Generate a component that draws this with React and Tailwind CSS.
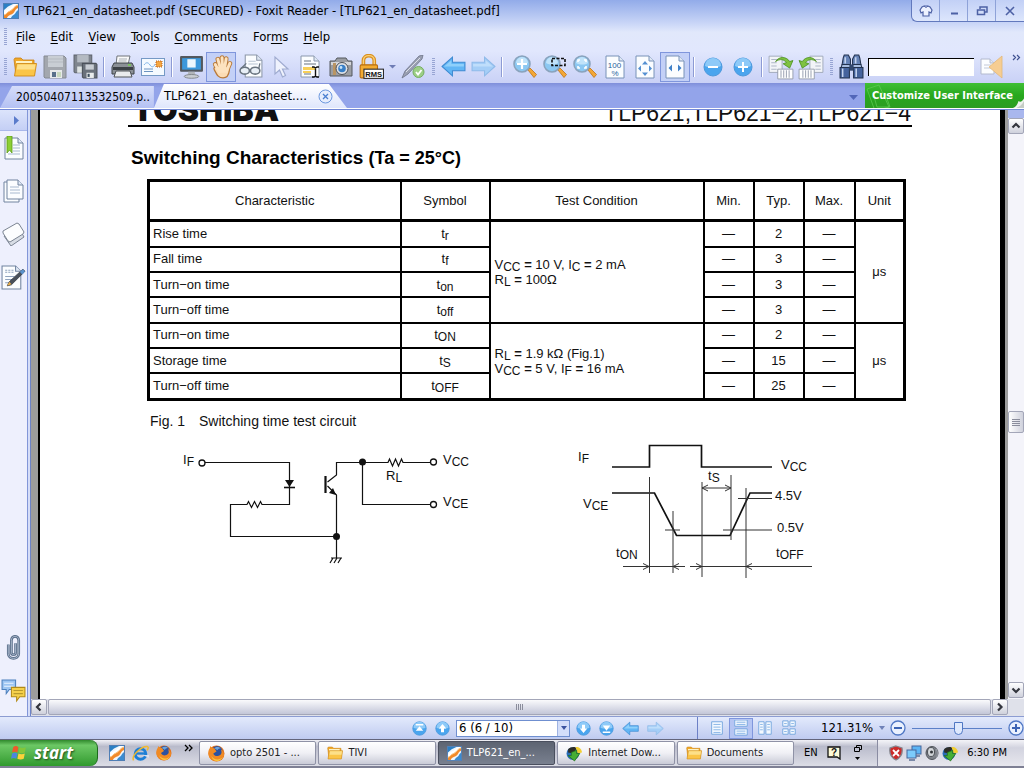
import React from "react";

const UI = "font-['DejaVu_Sans_Condensed','DejaVu_Sans',sans-serif]";

/* ---------- small shared pieces ---------- */

function Svg({ size = 24, children, box = "0 0 24 24", className = "" }) {
  return (
    <svg width={size} height={size} viewBox={box} fill="none" aria-hidden="true" className={`shrink-0 ${className}`}>
      {children}
    </svg>
  );
}

function Tool({ label, active, children }) {
  return (
    <button
      type="button"
      aria-label={label}
      className={`flex h-[30px] w-[30px] shrink-0 items-center justify-center border ${
        active ? "border-[#7f96dc] bg-[#c3d0f7]" : "border-transparent"
      }`}
    >
      {children}
    </button>
  );
}

const Sep = () => (
  <div className="flex w-2 shrink-0 justify-center">
    <div className="h-5 w-[2px] border-l border-[#8d9bd4] bg-white" />
  </div>
);

const Grip = () => (
  <div className="flex w-[10px] shrink-0 justify-center">
    <div className="h-[18px] w-[3px] bg-[repeating-linear-gradient(to_bottom,#98a5d3_0_1px,transparent_1px_2px)]" />
  </div>
);

function FoxitLogo({ size = 16 }) {
  return (
    <Svg size={size} box="0 0 16 16">
      <rect x=".5" y=".5" width="15" height="15" fill="#eef6fd" stroke="#4f7eb5" />
      <path d="M1 1h9L5 3.500 1 7z" fill="#2b7fc4" />
      <path d="M1 9c2-3 5-3 7-5 1-1 2-2 4-3h3c-3 1-4 3-5 5S5 9 3 11l-2 2z" fill="#fff" />
      <path d="M1 15v-3c2 0 3-3 6-4s4-5 8-6v3c-3 1-3 4-5 5.500S5 12 4 15z" fill="#f28a2a" />
      <path d="M1 12c2 0 3-3 6-4s4-5 8-6" stroke="#fbc37d" />
      <path d="M8 15c1-3 4-3 5-6l2-2v8z" fill="#3a8bd0" />
    </Svg>
  );
}

function Folder({ size = 24 }) {
  return (
    <Svg size={size}>
      <path d="M1 4.500l1-1.500h6l2 2h11v15H3z" fill="#f0a92b" stroke="#c98014" strokeWidth=".8" />
      <path d="M3 6h16v6H3z" fill="#fdf2c4" />
      <path d="M3.500 8.500h20l-2 12.500H1.500z" fill="#fbc548" stroke="#d08b17" strokeWidth=".9" />
      <path d="M4.500 9.500h18l-.8 5H3.700z" fill="#fde08a" />
    </Svg>
  );
}

function Disk() {
  return (
    <>
      <path d="M1 1h20l2 2v20H2l-1-1z" fill="#a3a7ae" stroke="#858a92" />
      <path d="M5 1h15v11H5z" fill="#c9ced4" />
      <path d="M5 4h15M5 7h15" stroke="#b5bac1" />
      <path d="M7 15h12v8H7z" fill="#e7eaea" />
      <path d="M9 17h4v5H9z" fill="#58708a" />
      <path d="M14 17h4v5h-4z" fill="#c7d8bd" />
    </>
  );
}

function PageShape({ x = 4, y = 1, w = 17, h = 22, stroke = "#7992b8", fill = "#fbfdff", fold = 5 }) {
  const r = x + w;
  return (
    <>
      <path d={`M${x} ${y}H${r - fold}L${r} ${y + fold}V${y + h}H${x}Z`} fill={fill} stroke={stroke} />
      <path d={`M${r - fold} ${y}V${y + fold}H${r}`} fill="#dfe8f5" stroke={stroke} />
    </>
  );
}

function Magnifier({ children }) {
  return (
    <Svg>
      <path d="M15 15l2-2 6.500 6.500-2.500 3z" fill="#f3a737" stroke="#bf7414" strokeWidth=".8" />
      <circle cx="9" cy="9" r="8" fill="#8cc8f2" stroke="#8aa3bd" strokeWidth="1.600" />
      <path d="M3 8a6 6 0 0 1 12 0c-3 2-8 2-12 0z" fill="#c0e3fa" />
      {children}
    </Svg>
  );
}

function Arrow({ flip, size = 25, pale }) {
  return (
    <Svg size={size} className={flip ? "-scale-x-100" : ""}>
      <path d="M1 12L11 3v5h12v8H11v5z" fill={pale ? "#a5cef7" : "#62b6f5"} stroke={pale ? "#8ebae9" : "#3f8bd2"} />
      <path d="M3 12l7-6v3.500h12v2.500z" fill={pale ? "#bfdefb" : "#8fd0fb"} />
    </Svg>
  );
}

function Round({ size = 20, children }) {
  return (
    <Svg size={size} box="0 0 20 20">
      <circle cx="10" cy="10" r="9" fill="#4aa5ee" stroke="#4c98dc" />
      <path d="M2 9a8 8 0 0 1 16 0c-4 2-12 2-16 0z" fill="#8ecaf8" />
      {children}
    </Svg>
  );
}

function RotateIcon({ flip }) {
  return (
    <Svg size={26}>
      <g transform={flip ? "translate(24 0) scale(-1 1)" : ""}>
        <path d="M1 2h12v15H1z" fill="#f2f4f8" stroke="#9aa3b5" strokeWidth=".8" />
        <path d="M3 5h6M3 8h5M3 11h5M3 14h5" stroke="#aeb6c6" />
        <path d="M9 14h14v9H9z" fill="#fff" stroke="#8d95a5" strokeWidth=".8" />
        <path d="M12 15v7M14.500 15v7M17 15v7M19.500 15v7" stroke="#a2a9b8" />
        <path d="M7 7c3-5 10-5 13 0l3-1-3 7-6-4 3-1c-2-3-6-4-10-1z" fill="#7fc241" stroke="#4d9221" strokeWidth=".8" />
      </g>
    </Svg>
  );
}

const HAND = "M6 10l4 7M8.500 5l2.500 9M12.500 3.500l.5 10M16.500 4.500l-1.500 9M20 9l-2.500 6";

function Hand() {
  return (
    <Svg size={25}>
      <path d={HAND} stroke="#b97a3a" strokeWidth="4.600" strokeLinecap="round" />
      <path d="M8 13l11-1 .5 4c-.5 4-2.500 7-6 7-4 0-5.500-2-8.500-8-1-2 1-3.500 3-2z" fill="#fbdcb4" stroke="#b97a3a" strokeWidth="1.200" />
      <path d={HAND} stroke="#fde3c0" strokeWidth="2.800" strokeLinecap="round" />
      <path d="M10 14h8v4h-7z" fill="#fde3c0" />
    </Svg>
  );
}

function Firefox({ size = 16 }) {
  return (
    <Svg size={size} box="0 0 16 16">
      <circle cx="8" cy="8" r="7.500" fill="#e2701b" />
      <circle cx="8.500" cy="6" r="5" fill="#2c52a0" />
      <path d="M6 3c2-2 5-1 6 0-2 0-3 1-3 2z" fill="#6da5dc" />
      <path d="M1 4c1-1 1-2 1-3 1 1 2 2 4 2L8 6 5 8c1 3 5 3 7 1 1-1 1-3 0-5 3 2 4 6 2 8-3 5-11 4-13-1-1-2-1-5 0-7z" fill="#f08a24" />
      <path d="M3 10c2 4 8 5 11 1-2 5-9 6-11-1z" fill="#fbc73f" />
    </Svg>
  );
}

function IE() {
  return (
    <Svg size={17} box="0 0 16 16">
      <circle cx="8" cy="8.500" r="5" stroke="#1d7fd6" strokeWidth="2.800" />
      <path d="M4 8h9" stroke="#1d7fd6" strokeWidth="2.200" />
      <path d="M9.500 9.300H16V12z" fill="#dbe0ee" />
      <path d="M1.500 14.500C-1 10 9 1 14.500 1.500 16 2 15 4 14 5" stroke="#f2b92c" strokeWidth="1.400" />
    </Svg>
  );
}

function IDM() {
  return (
    <Svg size={17} box="0 0 16 16">
      <circle cx="6.500" cy="8" r="6" fill="#2a6db7" />
      <path d="M2 4c2-2 6-3 8-1L7 8 2 7z" fill="#2d2d28" />
      <path d="M9 2c3-1 6 2 6 5l-4 1z" fill="#f2cf32" />
      <path d="M5 7l5-2v3h3l-5 7-6-5h3z" fill="#45ae35" stroke="#1f6e1b" strokeWidth=".7" />
    </Svg>
  );
}

/* ---------- title bar and menus ---------- */

function TitleBar() {
  return (
    <header className="flex h-[22px] shrink-0 items-start justify-between bg-linear-to-b from-[#92abe9] to-[#c6d3f6]">
      <div className="flex h-[22px] items-center gap-[5px] pl-[3px]">
        <FoxitLogo />
        <h1 className="whitespace-nowrap text-[13px] leading-4 text-black">
          TLP621_en_datasheet.pdf (SECURED) - Foxit Reader - [TLP621_en_datasheet.pdf]
        </h1>
      </div>
      <div className="flex h-[22px] divide-x divide-[#8ea2d8] rounded-bl-md border-b border-l border-[#6279bd] bg-linear-to-b from-[#c2d0f6] to-[#dde6fc]">
        <button type="button" aria-label="Skin" className="flex w-7 items-center justify-center">
          <Svg size={14} box="0 0 14 14">
            <path d="M5 2h4l2 1 2 3-1 3-2-1v4H4V8L2 9 1 6l2-3z" fill="#eef2ff" stroke="#4d61a5" strokeWidth="1.200" />
            <path d="M5 2l2 1.500L9 2" stroke="#4d61a5" />
          </Svg>
        </button>
        <button type="button" aria-label="Minimize" className="flex w-7 items-center justify-center">
          <Svg size={12} box="0 0 12 12"><path d="M3 8.500h7" stroke="#4d61a5" strokeWidth="2" /></Svg>
        </button>
        <button type="button" aria-label="Restore" className="flex w-7 items-center justify-center">
          <Svg size={12} box="0 0 12 12">
            <path d="M4 4V2h7v5H9" stroke="#4d61a5" strokeWidth="1.500" />
            <path d="M1.500 5h7v4.500h-7z" stroke="#4d61a5" strokeWidth="1.500" />
          </Svg>
        </button>
        <button type="button" aria-label="Close" className="flex w-7 items-center justify-center">
          <Svg size={12} box="0 0 12 12"><path d="M2 2l8 8M10 2l-8 8" stroke="#4d61a5" strokeWidth="1.600" /></Svg>
        </button>
      </div>
    </header>
  );
}

const MENUS = [
  ["", "F", "ile"],
  ["", "E", "dit"],
  ["", "V", "iew"],
  ["", "T", "ools"],
  ["", "C", "omments"],
  ["For", "m", "s"],
  ["", "H", "elp"],
];

function MenuBar() {
  return (
    <nav className="flex h-[29px] shrink-0 items-center bg-linear-to-b from-[#c6d3f6] via-[#e1e8fb] via-35% to-[#e1e7fd] text-[13px] leading-4 text-black">
      <Grip />
      <div className="flex gap-[15px] pl-[6px]">
        {MENUS.map(([a, k, b]) => (
          <button key={a + k + b} type="button">
            {a}
            <span className="underline underline-offset-2">{k}</span>
            {b}
          </button>
        ))}
      </div>
    </nav>
  );
}

/* ---------- toolbar ---------- */

function ToolBar() {
  return (
    <div role="toolbar" aria-label="Main" className="flex h-8 shrink-0 items-center bg-linear-to-b from-[#e1e7fd] to-[#c9d1f6] pb-px pr-[3px]">
      <Grip />
      <Tool label="Open"><Folder /></Tool>
      <Tool label="Save"><Svg><Disk /></Svg></Tool>
      <Tool label="Save a copy">
        <Svg size={25}>
          <path d="M1 1h17v17H2l-1-1z" fill="#7f858e" stroke="#5d636c" />
          <path d="M4 1h11v7H4z" fill="#b4bac2" />
          <path d="M4 12h5v6H4z" fill="#dfe4e4" />
          <path d="M9 9h13l1 1v13H10l-1-1z" fill="#6a717b" stroke="#4b515a" />
          <path d="M12 10h8v5h-8z" fill="#c8cdd4" />
          <path d="M13 18h7v5h-7z" fill="#e9ecec" />
          <path d="M14 19h2v3h-2z" fill="#3c4d5e" />
        </Svg>
      </Tool>
      <Sep />
      <Tool label="Print">
        <Svg>
          <path d="M6 1h13l-2 9H5z" fill="#fafafa" stroke="#70757b" />
          <path d="M3 8h18l2 4v7H1v-7z" fill="#8b9096" stroke="#3d4247" />
          <path d="M2 12h20v3H2z" fill="#3c4146" />
          <path d="M5 16h14l2 6H3z" fill="#e9ebed" stroke="#505459" />
          <path d="M17 10h3" stroke="#74d14b" strokeWidth="1.500" />
          <path d="M8 4h8M7.500 6h8" stroke="#a9afb5" />
        </Svg>
      </Tool>
      <Tool label="Email">
        <Svg>
          <rect x=".5" y="3.500" width="23" height="17" fill="#f5faff" stroke="#7599c5" />
          <path d="M3 10c2-3 4-3 6 0s4 2 5-1" stroke="#7fb4e8" />
          <path d="M3 14h9M3 16.500h9" stroke="#6c93c0" />
          <rect x="15" y="6" width="6" height="6" fill="#f5a742" stroke="#ba5e1c" strokeDasharray="1 1" />
        </Svg>
      </Tool>
      <Sep />
      <Tool label="Full screen">
        <Svg size={25}>
          <rect x="1" y="2" width="22" height="15" rx="1" fill="#53585e" />
          <rect x="3" y="4" width="18" height="11" fill="#3c98dc" />
          <path d="M8 5h8v8H8z" fill="#edf7fe" />
          <path d="M9 17h6l1 4H8z" fill="#b1b5ba" />
          <ellipse cx="12" cy="21.500" rx="7" ry="1.800" fill="#c9cdd1" stroke="#787d82" strokeWidth=".8" />
        </Svg>
      </Tool>
      <Tool label="Hand" active><Hand /></Tool>
      <Tool label="Reading mode">
        <Svg size={25}>
          <PageShape x={6} y={1} w={16} h={21} stroke="#8c97a8" />
          <path d="M9 7h7M9 9.500h9" stroke="#b8c3d2" />
          <ellipse cx="5.500" cy="16" rx="4.500" ry="3.300" fill="#e8eff6" stroke="#69747f" strokeWidth="1.500" />
          <ellipse cx="15.500" cy="16" rx="4.500" ry="3.300" fill="#e8eff6" stroke="#69747f" strokeWidth="1.500" />
          <path d="M10 15.500h1M2 14l5-5M19 14l1-5" stroke="#69747f" strokeWidth="1.300" />
        </Svg>
      </Tool>
      <Tool label="Select object">
        <Svg><path d="M6 2v17l4.500-4 3 7 3-1.500-3-6.500H19z" fill="#eff2fd" stroke="#9fabd0" strokeWidth="1.200" /></Svg>
      </Tool>
      <Tool label="Select text">
        <Svg>
          <PageShape x={2} y={1} w={18} h={21} stroke="#8a98ad" />
          <path d="M5 6h7M5 9h12M5 19h7" stroke="#67727f" strokeWidth="1.200" />
          <path d="M4 12h12v3H4zM4 16h8v2H4z" fill="#f7cf58" />
          <path d="M13 12h2l1.500 1L18 12h2M16.500 13v8M13 22h2l1.500-1 1.500 1h2" stroke="#111" strokeWidth="1.400" />
        </Svg>
      </Tool>
      <Tool label="Snapshot">
        <Svg>
          <path d="M1 6h5l2-3h9l2 3h4v15H1z" fill="#9b9ea3" stroke="#55595f" />
          <path d="M2 7h20v3H2z" fill="#d4d6d9" />
          <path d="M4 8h3v12H4z" fill="#b99564" />
          <circle cx="13" cy="13.500" r="6" fill="#e0e3e7" stroke="#4c5056" />
          <circle cx="13" cy="13.500" r="3.800" fill="#397fc6" />
          <circle cx="12" cy="12.500" r="1.400" fill="#c6e5fb" />
        </Svg>
      </Tool>
      <Tool label="RMS protect">
        <Svg size={26}>
          <path d="M5 11V6c0-6 10-6 10 0v5" stroke="#d99021" strokeWidth="3.400" />
          <path d="M5 11V6c0-6 10-6 10 0v5" stroke="#fbd37a" strokeWidth="1.200" />
          <rect x="2" y="10" width="16" height="12" rx="1" fill="#f3ab30" stroke="#b66c10" />
          <rect x="5.500" y="14" width="18" height="8.500" fill="#fff" stroke="#2a2a2a" />
          <text x="14.500" y="21" fontSize="7" textAnchor="middle" fill="#111" fontWeight="bold" fontFamily="Liberation Sans, sans-serif">RMS</text>
        </Svg>
      </Tool>
      <button type="button" aria-label="RMS options" className="flex h-[30px] w-3 shrink-0 items-center justify-center">
        <Svg size={7} box="0 0 7 7"><path d="M0 2h7L3.500 5.500z" fill="#6f7db5" /></Svg>
      </button>
      <Tool label="Sign">
        <Svg>
          <path d="M1 23L4 16 18 1l4-1-1 4L7 19z" fill="#9aa0b2" stroke="#6d7388" strokeWidth=".8" />
          <path d="M5 17L19 3" stroke="#dde0e9" />
          <circle cx="17.500" cy="17" r="5.500" fill="#9ccf86" stroke="#76ad62" />
          <path d="M15 17l2 2.500 3.500-4.500" stroke="#fff" strokeWidth="1.800" />
        </Svg>
      </Tool>
      <Grip />
      <Tool label="Previous view"><Arrow /></Tool>
      <Tool label="Next view"><Arrow flip pale /></Tool>
      <Sep />
      <div className="ml-1 flex">
        <Tool label="Zoom in"><Magnifier><path d="M9 4v10M4 9h10" stroke="#fff" strokeWidth="2.200" /></Magnifier></Tool>
        <Tool label="Marquee zoom"><Magnifier><path d="M9 3.500h13v7H9z" stroke="#111" strokeWidth="1.600" strokeDasharray="3 1.500" /></Magnifier></Tool>
        <Tool label="Loupe"><Magnifier><path d="M5 7V5h2M11 5h2v2M13 11v2h-2M7 13H5v-2" stroke="#fff" strokeWidth="1.600" /></Magnifier></Tool>
        <Tool label="Actual size">
          <Svg>
            <PageShape x={3} y={1} w={18} h={22} />
            <text x="11.500" y="13" fontSize="8" textAnchor="middle" fill="#2a5f9b" fontFamily="Liberation Sans, sans-serif">100</text>
            <text x="12" y="21" fontSize="8" textAnchor="middle" fill="#2a5f9b" fontFamily="Liberation Sans, sans-serif">%</text>
          </Svg>
        </Tool>
        <Tool label="Fit page">
          <Svg>
            <PageShape x={3} y={1} w={18} h={22} />
            <path d="M12 6l3 3.500H9zM12 21l3-3.500H9zM5 13.500l3-3v6zM19 13.500l-3-3v6z" fill="#5490d2" />
          </Svg>
        </Tool>
        <Tool label="Fit width" active>
          <Svg>
            <PageShape x={3} y={1} w={18} h={22} />
            <path d="M5.500 13L9 9.500v7zM18.500 13L15 9.500v7z" fill="#3f80c8" />
          </Svg>
        </Tool>
      </div>
      <Sep />
      <Tool label="Zoom out"><Round><path d="M5 10h10" stroke="#fff" strokeWidth="2" /></Round></Tool>
      <Tool label="Zoom in step"><Round><path d="M5 10h10M10 5v10" stroke="#fff" strokeWidth="2" /></Round></Tool>
      <Sep />
      <Tool label="Rotate right"><RotateIcon /></Tool>
      <Tool label="Rotate left"><RotateIcon flip /></Tool>
      <Grip />
      <Tool label="Find">
        <Svg size={25}>
          <path d="M5 1h4l2 4v5H3l1-6zM19 1h-4l-2 4v5h8l-1-6z" fill="#6683b7" stroke="#22324f" />
          <path d="M3 10h8v3H2zM21 10h-8v3h9z" fill="#a7bcdf" stroke="#22324f" />
          <path d="M1 13h9v10H1zM14 13h9v10h-9z" fill="#45639d" stroke="#22324f" />
          <path d="M3.500 14v8M16.500 14v8M6 3v6M16 3v6" stroke="#c4d4ef" strokeWidth="1.500" />
          <path d="M10 10h4v6h-4z" fill="#32486f" />
        </Svg>
      </Tool>
      <input
        type="text"
        aria-label="Find text"
        className="ml-[2px] h-[18px] w-[106px] border-l border-t border-black bg-white px-1 text-[13px] outline-none"
      />
      <button type="button" aria-label="Search options" className="ml-[6px] flex h-[30px] w-6 shrink-0 items-center justify-center">
        <Svg>
          <PageShape x={1} y={4} w={13} h={15} stroke="#b3bace" fold={4} />
          <path d="M4 10h7M4 13h7" stroke="#c2c9d8" />
          <path d="M22 1v22L9 12z" fill="#f6cd92" stroke="#e2b878" strokeWidth=".8" />
        </Svg>
      </button>
      <button type="button" aria-label="More tools" className="ml-auto self-start pt-[2px]">
        <Svg size={9} box="0 0 9 9"><path d="M1 2l2.500 2.500L1 7M5 2l2.500 2.500L5 7" stroke="#3f5190" strokeWidth="1.200" /></Svg>
      </button>
    </div>
  );
}

/* ---------- document tabs ---------- */

function TabBar() {
  return (
    <div className="shrink-0 border-b border-[#7288d6] bg-white pb-px">
      <div className="flex h-[25px] items-stretch justify-between bg-linear-to-b from-[#7f8fda] to-[#93a4ea] to-20%">
        <div role="tablist" className="flex items-end leading-4 text-black">
          <button
            type="button"
            role="tab"
            aria-selected="false"
            className="flex h-[22px] items-center whitespace-nowrap bg-linear-to-b from-[#d5ddfa] to-[#b4c1f3] pl-4 pr-1 text-[12px] [clip-path:polygon(0_100%,12px_0,100%_0,100%_100%)]"
          >
            20050407113532509.p..
          </button>
          <div className="bg-white [clip-path:polygon(0_100%,10px_0,calc(100%_-_18px)_0,100%_100%)]">
            <div className="flex h-6 items-center gap-[11px] bg-linear-to-b from-white to-[#dfe6fc] pl-[10px] pr-[14px]">
              <button type="button" role="tab" aria-selected="true" className="whitespace-nowrap text-[13px]">
                TLP621_en_datasheet....
              </button>
              <button type="button" aria-label="Close tab">
                <Svg size={15} box="0 0 15 15">
                  <circle cx="7.500" cy="7.500" r="6.500" fill="#e6edfd" stroke="#6b97dd" />
                  <path d="M5 5l5 5M10 5l-5 5" stroke="#4a7fd0" strokeWidth="1.300" />
                </Svg>
              </button>
            </div>
          </div>
        </div>
        <div className="flex items-stretch">
          <button type="button" aria-label="Tab list" className="mr-[7px] flex items-center pt-1">
            <Svg size={9} box="0 0 9 9"><path d="M0 2h9L4.500 7z" fill="#5266b8" /></Svg>
          </button>
          <a
            href="#customize"
            className="relative flex w-[159px] items-center overflow-hidden bg-linear-to-b from-[#3fbf35] via-[#27a81d] to-[#2c9c23] pl-[7px] text-[11px] font-bold leading-4 text-white"
          >
            <Svg size={30} box="0 0 30 30" className="absolute left-0 top-0">
              <path d="M2 6l12-4 10 22-14 4zM8 10h12l5 14H12z" stroke="#5cc950" strokeWidth=".8" />
            </Svg>
            <span className="relative whitespace-nowrap">Customize User Interface</span>
            <Svg size={11} box="0 0 14 14" className="absolute bottom-0 right-0">
              <path d="M0 14C5 12 6 8 7 5c2 2 5 1 7-3v12z" fill="#eef1ee" />
              <path d="M4 14c5-2 8-5 10-9v9z" fill="#c5cdc5" />
            </Svg>
          </a>
        </div>
      </div>
    </div>
  );
}

/* ---------- side panel ---------- */

function SideBar() {
  return (
    <aside className="flex w-7 shrink-0 flex-col border-r border-[#8296d8] bg-[#eef0fd]">
      <button type="button" aria-label="Expand panel" className="flex h-[21px] items-center justify-end border-b border-[#a9b7ea] bg-linear-to-b from-[#dce4fb] to-[#c4cff5] pr-[6px]">
        <Svg size={9} box="0 0 9 9"><path d="M2 0l5 4.500L2 9z" fill="#5a7bcb" /></Svg>
      </button>
      <div className="flex flex-col items-center gap-[19px] pt-[5px]">
        <button type="button" aria-label="Bookmarks">
          <Svg>
            <PageShape x={3} y={2} w={18} h={21} stroke="#70839f" />
            <path d="M11 9h7M11 12h7M11 15h7M6 18h12" stroke="#a8b9cf" />
            <path d="M5 0h5v17l-2.500-3L5 17z" fill="#8dcf35" stroke="#5b9a1a" strokeWidth=".8" />
          </Svg>
        </button>
        <button type="button" aria-label="Pages">
          <Svg>
            <PageShape x={2} y={3} w={15} h={20} stroke="#70839f" />
            <PageShape x={5} y={1} w={16} h={19} stroke="#70839f" />
            <path d="M8 8h9M8 11h10M8 14h10" stroke="#a8b9cf" />
          </Svg>
        </button>
        <button type="button" aria-label="Layers">
          <Svg>
            <path d="M2 14l15-8 5 9-13 9z" fill="#d8dde5" stroke="#7b8492" />
            <path d="M1 9L15 1l2 1 5 8-1 2-13 8-2-1-5-8z" fill="#fcfdfe" stroke="#7b8492" />
          </Svg>
        </button>
        <button type="button" aria-label="Signatures">
          <Svg size={25}>
            <PageShape x={1} y={1} w={18} h={22} stroke="#70839f" />
            <path d="M4 5h2M7 5h2M10 5h2M4 7h2M7 7h2M10 7h2M4 11h9M4 14h7M4 17h4" stroke="#8fa2bd" />
            <path d="M6 20l2-4L21 4l2 2L10 19z" fill="#48505b" stroke="#2a2f36" strokeWidth=".7" />
            <path d="M18 6.500L21 4l2 2-2.500 3z" fill="#5c93cc" />
            <path d="M6 20l2-4 2 2.500z" fill="#f0b24a" />
          </Svg>
        </button>
      </div>
      <div className="mt-auto flex flex-col items-center gap-[18px] pb-[13px]">
        <button type="button" aria-label="Attachments">
          <Svg size={25}>
            <path d="M7 9v9c0 6 10 6 10 0V5c0-5-7-5-7 0v12c0 2.500 4 2.500 4 0V8" stroke="#5b6f8b" strokeWidth="2.600" />
            <path d="M7 9v9c0 6 10 6 10 0V5c0-5-7-5-7 0v12c0 2.500 4 2.500 4 0V8" stroke="#a9b8cc" strokeWidth=".9" />
          </Svg>
        </button>
        <button type="button" aria-label="Comments">
          <Svg size={25}>
            <path d="M1 2h13v9H8l-3 4v-4H1z" fill="#9cc5f2" stroke="#4d80bd" />
            <path d="M3 5h9M3 8h9" stroke="#e9f4ff" />
            <path d="M10 9h13v9h-5l-3 4v-4h-5z" fill="#f5d04a" stroke="#b28a17" />
            <path d="M12 12h9M12 15h9" stroke="#b99a2c" />
          </Svg>
        </button>
      </div>
    </aside>
  );
}

/* ---------- document page ---------- */

const Sym = ({ a, b }) => (
  <span>
    {a}
    <span className="relative top-[2px] text-[12px] leading-none">{b}</span>
  </span>
);

const ROWS = [
  { name: "Rise time", a: "t", b: "r", typ: "2" },
  { name: "Fall time", a: "t", b: "f", typ: "3" },
  { name: "Turn−on time", a: "t", b: "on", typ: "3" },
  { name: "Turn−off time", a: "t", b: "off", typ: "3" },
  { name: "Turn−on time", a: "t", b: "ON", typ: "2" },
  { name: "Storage time", a: "t", b: "S", typ: "15" },
  { name: "Turn−off time", a: "t", b: "OFF", typ: "25" },
];

function CharacteristicsTable() {
  const cell = "border-2 border-black p-0 font-normal";
  const cond = `${cell} px-1 text-left leading-[15px]`;
  return (
    <table className="h-[222px] w-[758px] table-fixed border-collapse border-[3px] border-black text-center text-[13px] leading-4">
      <colgroup>
        <col className="w-[252px]" />
        <col className="w-[89px]" />
        <col className="w-[214px]" />
        <col className="w-[50px]" />
        <col className="w-[50px]" />
        <col className="w-[51px]" />
        <col className="w-[50px]" />
      </colgroup>
      <thead>
        <tr className="h-10 border-b-[3px] border-black">
          {["Characteristic", "Symbol", "Test Condition", "Min.", "Typ.", "Max.", "Unit"].map((h) => (
            <th key={h} scope="col" className={cell}>{h}</th>
          ))}
        </tr>
      </thead>
      <tbody>
        {ROWS.map((r, i) => (
          <tr key={i}>
            <td className={`${cell} pl-[3px] text-left`}>{r.name}</td>
            <td className={cell}><Sym a={r.a} b={r.b} /></td>
            {i === 0 && (
              <td rowSpan={4} className={cond}>
                <Sym a="V" b="CC" /> <b>=</b> 10 V, <Sym a="I" b="C" /> <b>=</b> 2 mA
                <br />
                <Sym a="R" b="L" /> <b>=</b> 100Ω
              </td>
            )}
            {i === 4 && (
              <td rowSpan={3} className={cond}>
                <Sym a="R" b="L" /> <b>=</b> 1.9 kΩ (Fig.1)
                <br />
                <Sym a="V" b="CC" /> <b>=</b> 5 V, <Sym a="I" b="F" /> <b>=</b> 16 mA
              </td>
            )}
            <td className={cell}>—</td>
            <td className={cell}>{r.typ}</td>
            <td className={cell}>—</td>
            {i === 0 && <td rowSpan={4} className={cell}>μs</td>}
            {i === 4 && <td rowSpan={3} className={cell}>μs</td>}
          </tr>
        ))}
      </tbody>
    </table>
  );
}

const Lbl = ({ x, y, a, b }) => (
  <text x={x} y={y} fontSize="13" fill="#111">
    {a}
    {b && <tspan dy="2" fontSize="12">{b}</tspan>}
  </text>
);

/* Coordinates are shifted so that the drawing's origin is (180, 440). */
function CircuitDrawing() {
  return (
    <svg width="300" height="145" viewBox="180 440 300 145" fill="none" stroke="#111" className="shrink-0" role="img" aria-label="Test circuit">
      <g strokeWidth="1.200">
        <path d="M205 462.500H289.500V504.500H262l-1.500-3-3 6-3-6-3 6-3-6-1.500 3H230.500V536.500H336.500" />
        <path d="M336.500 558V495l-9-9M327.500 482l9-7V462.500H388l1.500-3.500 3 7 3-7 3 7 3-7 1.500 3.500H430" />
        <path d="M362.500 462.500V504.500H430" />
        <path d="M331 558h11M333 558l-3 5M337 558l-3 5M341 558l-3 5" />
      </g>
      <path d="M325.500 476v17" strokeWidth="2.200" />
      <path d="M284 487.500h11" strokeWidth="1.600" />
      <path d="M285 480h9l-4.500 7zM336 495l-7-2 4-5z" fill="#111" stroke="none" />
      <circle cx="362.500" cy="462" r="3.500" fill="#111" stroke="none" />
      <circle cx="336.500" cy="536.500" r="3.500" fill="#111" stroke="none" />
      <g fill="#fff" strokeWidth="1.300">
        <circle cx="202" cy="463" r="3" />
        <circle cx="433.500" cy="462" r="3" />
        <circle cx="433.500" cy="504.500" r="3" />
      </g>
      <g stroke="none">
        <Lbl x={183} y={464} a="I" b="F" />
        <Lbl x={443} y={464} a="V" b="CC" />
        <Lbl x={443} y={506} a="V" b="CE" />
        <Lbl x={386} y={480} a="R" b="L" />
      </g>
    </svg>
  );
}

/* Coordinates are shifted so that the drawing's origin is (575, 440). */
function TimingDrawing() {
  return (
    <svg width="245" height="145" viewBox="575 440 245 145" fill="none" stroke="#111" className="shrink-0" role="img" aria-label="Timing diagram">
      <g strokeWidth="1.700">
        <path d="M612 467H649.500V445.500H701.500V467H772" />
        <path d="M612 493H654.500L676.500 535.500H730L750 493H772" />
      </g>
      <g strokeWidth="1" stroke="#333">
        <path d="M649.500 477V573M673 511V573M702 482V577M731 475V540M746 488V578" />
        <path d="M738 498.500H772M723 530H772M665 530H680" />
        <path d="M623 566.500H673M673 566.500H685M690 566.500H812M702 488H731" />
        <path d="M643 563.500l6 3-6 3M679 563.500l-6 3 6 3M696 563.500l6 3-6 3M752 563.500l-6 3 6 3M708 485l-6 3 6 3M725 485l6 3-6 3" />
      </g>
      <g stroke="none">
        <Lbl x={578} y={461} a="I" b="F" />
        <Lbl x={781} y={469} a="V" b="CC" />
        <Lbl x={583} y={508} a="V" b="CE" />
        <Lbl x={708} y={480} a="t" b="S" />
        <Lbl x={775} y={500} a="4.5V" />
        <Lbl x={777} y={532} a="0.5V" />
        <Lbl x={616} y={557} a="t" b="ON" />
        <Lbl x={776} y={557} a="t" b="OFF" />
      </g>
    </svg>
  );
}

function DocumentPage() {
  return (
    <main className="flex min-h-0 min-w-0 flex-1 bg-[#9c9c9c] pl-[7px] pr-[3px]">
      <article className="min-w-0 flex-1 overflow-hidden border-l-2 border-r-[5px] border-black bg-white pl-[88px] font-['Liberation_Sans',Arial,sans-serif] text-[#111]">
        <div className="flex h-[17px] w-[784px] items-end justify-between overflow-hidden border-b-2 border-black pl-1 pr-px">
          <span className="font-['Inter','Liberation_Sans',sans-serif] text-[32px] font-black leading-[30px]">TOSHIBA</span>
          <span className="text-[23px] leading-[23px]">TLP621,TLP621−2,TLP621−4</span>
        </div>
        <h2 className="pl-[3px] pt-5 text-[19px] font-bold leading-[22px] text-black">
          Switching Characteristics <span className="text-[18px]">(Ta = 25°C)</span>
        </h2>
        <div className="pl-[19px] pt-[10px]">
          <CharacteristicsTable />
          <p className="flex gap-[14px] pl-[3px] pt-[10px] text-[14px] leading-5">
            <span>Fig. 1</span>
            <span>Switching time test circuit</span>
          </p>
        </div>
        <div className="flex gap-[95px] pl-[52px] pt-[9px]">
          <CircuitDrawing />
          <TimingDrawing />
        </div>
      </article>
    </main>
  );
}

const CHEVRONS = {
  up: "M1.500 6L5 2.500 8.500 6",
  down: "M1.500 3L5 6.500 8.500 3",
  left: "M6.500 1L3 4.500 6.500 8",
  right: "M3 1l3.500 3.500L3 8",
};

function ScrollButton({ dir }) {
  return (
    <button
      type="button"
      aria-label={`Scroll ${dir}`}
      className="flex h-4 w-4 shrink-0 items-center justify-center rounded-xs border border-[#a3a6b8] bg-linear-to-b from-white to-[#cfd1dc]"
    >
      <Svg size={10} box="0 0 10 9"><path d={CHEVRONS[dir]} stroke="#33353d" strokeWidth="2.200" /></Svg>
    </button>
  );
}

function Viewer() {
  return (
    <div className="flex min-w-0 flex-1 flex-col border-l border-[#6d83c8]">
      <div className="flex min-h-0 flex-1">
        <DocumentPage />
        <div className="flex w-4 shrink-0 flex-col bg-[#f4f4fa] pb-px">
          <div className="h-2 shrink-0 bg-[#a9b7ee]" />
          <ScrollButton dir="up" />
          <div className="flex flex-1 flex-col items-center">
            <div className="flex-[278]" />
            <div className="flex h-[22px] w-4 flex-col items-center justify-center gap-px rounded-xs border border-[#a3a6b8] bg-linear-to-r from-white to-[#cfd1dc]">
              <div className="h-px w-2 bg-[#8a8d9c]" />
              <div className="h-px w-2 bg-[#8a8d9c]" />
              <div className="h-px w-2 bg-[#8a8d9c]" />
              <div className="h-px w-2 bg-[#8a8d9c]" />
            </div>
            <div className="flex-[249]" />
          </div>
          <ScrollButton dir="down" />
        </div>
      </div>
      <div className="flex h-[17px] shrink-0 items-start bg-[#dfe1ea] pr-4">
        <ScrollButton dir="left" />
        <div className="mx-px flex h-4 flex-1 items-center justify-center gap-px rounded-xs border border-[#a3a6b8] bg-linear-to-b from-[#fafafc] to-[#c3c6d8]">
          <div className="h-[6px] w-px bg-[#8a8d9c]" />
          <div className="h-[6px] w-px bg-[#8a8d9c]" />
          <div className="h-[6px] w-px bg-[#8a8d9c]" />
          <div className="h-[6px] w-px bg-[#8a8d9c]" />
        </div>
        <ScrollButton dir="right" />
      </div>
    </div>
  );
}

/* ---------- status bar ---------- */

const LAYOUTS = [
  ["Single page", "M3 2h12v14H3z", "M5 5h8M5 8h8M5 11h8M5 14h8"],
  ["Continuous", "M2 0h14v7H2zM2 10h14v7H2z", "M4 2.500h10M4 5h10M4 12.500h10M4 15h10"],
  ["Facing", "M2 2h6v14H2zM10 2h6v14h-6z", "M3.500 5h3M3.500 8h3M3.500 11h3M11.500 5h3M11.500 8h3M11.500 11h3"],
  ["Continuous facing", "M2 1h6v6H2zM10 1h6v6h-6zM2 10h6v6H2zM10 10h6v6h-6z", "M3.500 4h3M11.500 4h3M3.500 13h3M11.500 13h3"],
];

function StatusBar() {
  return (
    <div className="flex h-[23px] shrink-0 items-center justify-end border-t border-[#8c9cd2] bg-linear-to-b from-[#e3eafc] to-[#bfcbf0] text-[13px] leading-4 text-black">
      <div className="flex items-center gap-2">
        <button type="button" aria-label="First page">
          <Round size={15}><path d="M5 5h10" stroke="#fff" strokeWidth="2" /><path d="M10 7l5 6H5z" fill="#fff" /></Round>
        </button>
        <button type="button" aria-label="Previous page">
          <Round size={15}><path d="M10 4l5 6h-3v5H8v-5H5z" fill="#fff" /></Round>
        </button>
        <div className="-mx-[2px] flex h-[17px] w-[114px] border border-[#6f8fd0] bg-white">
          <input type="text" aria-label="Page" defaultValue="6 (6 / 10)" className="w-0 flex-1 bg-transparent pl-[2px] outline-none" />
          <button type="button" aria-label="Choose page" className="flex w-3 items-center justify-center border-l border-[#9fb3e2] bg-[#d3defa]">
            <Svg size={6} box="0 0 6 6"><path d="M0 1h6L3 5z" fill="#3a53a0" /></Svg>
          </button>
        </div>
        <button type="button" aria-label="Next page">
          <Round size={15}><path d="M10 16l5-6h-3V5H8v5H5z" fill="#fff" /></Round>
        </button>
        <button type="button" aria-label="Last page">
          <Round size={15}><path d="M5 15h10" stroke="#fff" strokeWidth="2" /><path d="M10 13l5-7H5z" fill="#fff" /></Round>
        </button>
        <button type="button" aria-label="Back"><Arrow size={17} /></button>
        <button type="button" aria-label="Forward"><Arrow size={17} flip pale /></button>
      </div>
      <div className="ml-[33px] h-full w-px bg-[#6c80c6]" />
      <div className="flex items-center pl-[7px]">
        {LAYOUTS.map(([label, box, lines], i) => (
          <button
            key={label}
            type="button"
            aria-label={label}
            className={`flex h-[21px] w-6 items-center justify-center ${i === 1 ? "border border-[#7f96dc] bg-[#b5c5f3]" : ""}`}
          >
            <Svg size={16} box="0 0 18 18">
              <path d={box} fill="#f4f9ff" stroke="#6fa2dc" />
              <path d={lines} stroke="#7fb0e4" />
            </Svg>
          </button>
        ))}
      </div>
      <output className="ml-5 w-[52px] whitespace-nowrap">121.31%</output>
      <button type="button" aria-label="Zoom presets" className="ml-[6px]">
        <Svg size={6} box="0 0 6 6"><path d="M0 1h6L3 5z" fill="#6f82b8" /></Svg>
      </button>
      <button type="button" aria-label="Zoom out" className="ml-[5px]">
        <Svg size={16} box="0 0 16 16">
          <circle cx="8" cy="8" r="7" fill="#eaf1fe" stroke="#4f77c4" strokeWidth="1.300" />
          <path d="M4 8h8" stroke="#3c64b4" strokeWidth="2" />
        </Svg>
      </button>
      <input
        type="range"
        aria-label="Zoom level"
        min="0"
        max="100"
        defaultValue="52"
        className="mx-[6px] h-4 w-[90px] appearance-none bg-[linear-gradient(#5b80c8,#5b80c8)] bg-[length:100%_1px] bg-center bg-no-repeat [&::-webkit-slider-thumb]:h-[13px] [&::-webkit-slider-thumb]:w-[9px] [&::-webkit-slider-thumb]:appearance-none [&::-webkit-slider-thumb]:rounded-b-full [&::-webkit-slider-thumb]:border [&::-webkit-slider-thumb]:border-[#4f77c4] [&::-webkit-slider-thumb]:bg-[#dfe9fd]"
      />
      <button type="button" aria-label="Zoom in">
        <Svg size={16} box="0 0 16 16">
          <circle cx="8" cy="8" r="7" fill="#eaf1fe" stroke="#4f77c4" strokeWidth="1.300" />
          <path d="M4 8h8M8 4v8" stroke="#3c64b4" strokeWidth="2" />
        </Svg>
      </button>
    </div>
  );
}

/* ---------- taskbar ---------- */

const TASKS = [
  { label: "opto 2501 - ...", icon: <Firefox size={17} /> },
  { label: "TIVI", icon: <Folder size={16} /> },
  { label: "TLP621_en_...", icon: <FoxitLogo size={15} />, active: true },
  { label: "Internet Dow...", icon: <IDM /> },
  { label: "Documents", icon: <Folder size={16} /> },
];

function TaskBar() {
  return (
    <footer className="flex h-[29px] shrink-0 items-stretch border-b-2 border-t border-b-[#7e8094] border-t-[#63657b] bg-linear-to-b from-[#f2f2f7] via-[#b9bbcb] via-25% to-[#dcdde6]">
      <button
        type="button"
        className="flex w-[98px] shrink-0 items-center gap-[5px] rounded-r-lg border-r border-[#1c6a1c] bg-linear-to-b from-[#2f8a2c] via-[#6cc865] via-20% to-[#2f9a2d] pl-[10px] font-['Open_Sans','Noto_Sans',sans-serif] text-[17px] font-bold italic leading-5 text-white [text-shadow:1px_1px_2px_#1d4f1d]"
      >
        <Svg size={19} box="0 0 18 18">
          <path d="M3 3c2-2 4-1 5 0L7 8C5 7 4 7 2 8z" fill="#ee5a2b" />
          <path d="M9 3c2 1 4 1 6 0l-1 5c-2 1-4 1-6 0z" fill="#82c63a" />
          <path d="M2 9c2-1 4-1 5 0l-1 5c-2-1-3-1-5 0z" fill="#4a86e0" />
          <path d="M8 9c2 1 4 1 6 0l-1 5c-2 1-4 1-6 0z" fill="#fbd23a" />
        </Svg>
        start
      </button>
      <div className="flex w-[101px] shrink-0 items-center gap-[7px] pl-[11px]">
        <button type="button" aria-label="Foxit Reader"><FoxitLogo /></button>
        <button type="button" aria-label="Internet Explorer"><IE /></button>
        <button type="button" aria-label="Firefox"><Firefox /></button>
        <button type="button" aria-label="More shortcuts" className="self-start pl-[5px] pt-1">
          <Svg size={9} box="0 0 9 9"><path d="M1 1l3 3-3 3M5 1l3 3-3 3" stroke="#000" strokeWidth="1.300" /></Svg>
        </button>
      </div>
      <div className="flex min-w-0 flex-1 items-center gap-[2px] pr-px">
        {TASKS.map((t) => (
          <button
            key={t.label}
            type="button"
            className={`flex h-6 min-w-0 flex-1 items-center gap-[5px] whitespace-nowrap rounded-xs border pl-2 text-[11px] leading-4 ${
              t.active
                ? "border-[#4a4f5e] bg-linear-to-b from-[#5d6472] to-[#79808f] text-white"
                : "border-[#8f92a6] bg-linear-to-b from-white via-[#f0f0f5] to-[#c9cbd7] text-[#222]"
            }`}
          >
            {t.icon}
            {t.label}
          </button>
        ))}
      </div>
      <div className="flex w-[82px] shrink-0 items-center gap-[9px] pl-[9px] text-[11px] leading-4 text-black">
        <button type="button">EN</button>
        <button type="button" aria-label="Help">
          <Svg size={14} box="0 0 14 14">
            <path d="M1 1h12v12l-3-2H1z" fill="#fdfbd8" stroke="#111" strokeWidth="1.300" />
            <text x="7" y="10" fontSize="10" fontWeight="bold" textAnchor="middle" fill="#111" fontFamily="Liberation Sans, sans-serif">?</text>
          </Svg>
        </button>
        <button type="button" aria-label="Language bar options" className="flex h-full w-4 flex-col items-center justify-between py-[5px]">
          <Svg size={8} box="0 0 8 8"><path d="M2.500 2.500v-2h5v4h-2M.5 2.500h5v4h-5z" stroke="#000" /></Svg>
          <Svg size={5} box="0 0 5 5"><path d="M0 1h5L2.500 4z" fill="#000" /></Svg>
        </button>
      </div>
      <div className="flex w-[147px] shrink-0 items-center gap-[2px] border-l border-[#8a8ca2] bg-linear-to-b from-[#f4f4f8] via-[#d2d3df] via-30% to-[#e7e7ee] pl-[10px] text-[11px] leading-4 text-black">
        <Svg size={16} box="0 0 16 16">
          <path d="M8 1l6 2c1 6-2 10-6 12C4 13 1 9 2 3z" fill="#cc2a2a" stroke="#84868f" strokeWidth="1.300" />
          <path d="M5 5l6 6M11 5l-6 6" stroke="#fff" strokeWidth="1.800" />
        </Svg>
        <Svg size={16} box="0 0 16 16">
          <rect x="6" y="1" width="9" height="8" fill="#5cb4f4" stroke="#47669b" />
          <rect x="1" y="5" width="9" height="8" fill="#7ccbfb" stroke="#47669b" />
          <path d="M3 15h6M10 11h4" stroke="#5a6d93" strokeWidth="1.500" />
        </Svg>
        <Svg size={16} box="0 0 16 16">
          <ellipse cx="8" cy="8" rx="6" ry="6.500" fill="#7f838b" stroke="#50545b" />
          <ellipse cx="7" cy="7" rx="3.500" ry="4.500" fill="#d3d6da" stroke="#4d5157" />
          <circle cx="7.500" cy="7" r="1.500" fill="#33363b" />
          <path d="M12 4c2 3 2 6 0 9" stroke="#9da1aa" />
        </Svg>
        <IDM />
        <time className="ml-auto whitespace-nowrap pr-[17px]">6:30 PM</time>
      </div>
    </footer>
  );
}

export default function App() {
  return (
    <div className={`flex h-screen flex-col overflow-hidden bg-[#e1e7fd] ${UI}`}>
      <TitleBar />
      <MenuBar />
      <ToolBar />
      <TabBar />
      <div className="flex min-h-0 flex-1 bg-[#d5ddf8]">
        <SideBar />
        <div className="w-[2px] shrink-0" />
        <Viewer />
      </div>
      <StatusBar />
      <TaskBar />
    </div>
  );
}
